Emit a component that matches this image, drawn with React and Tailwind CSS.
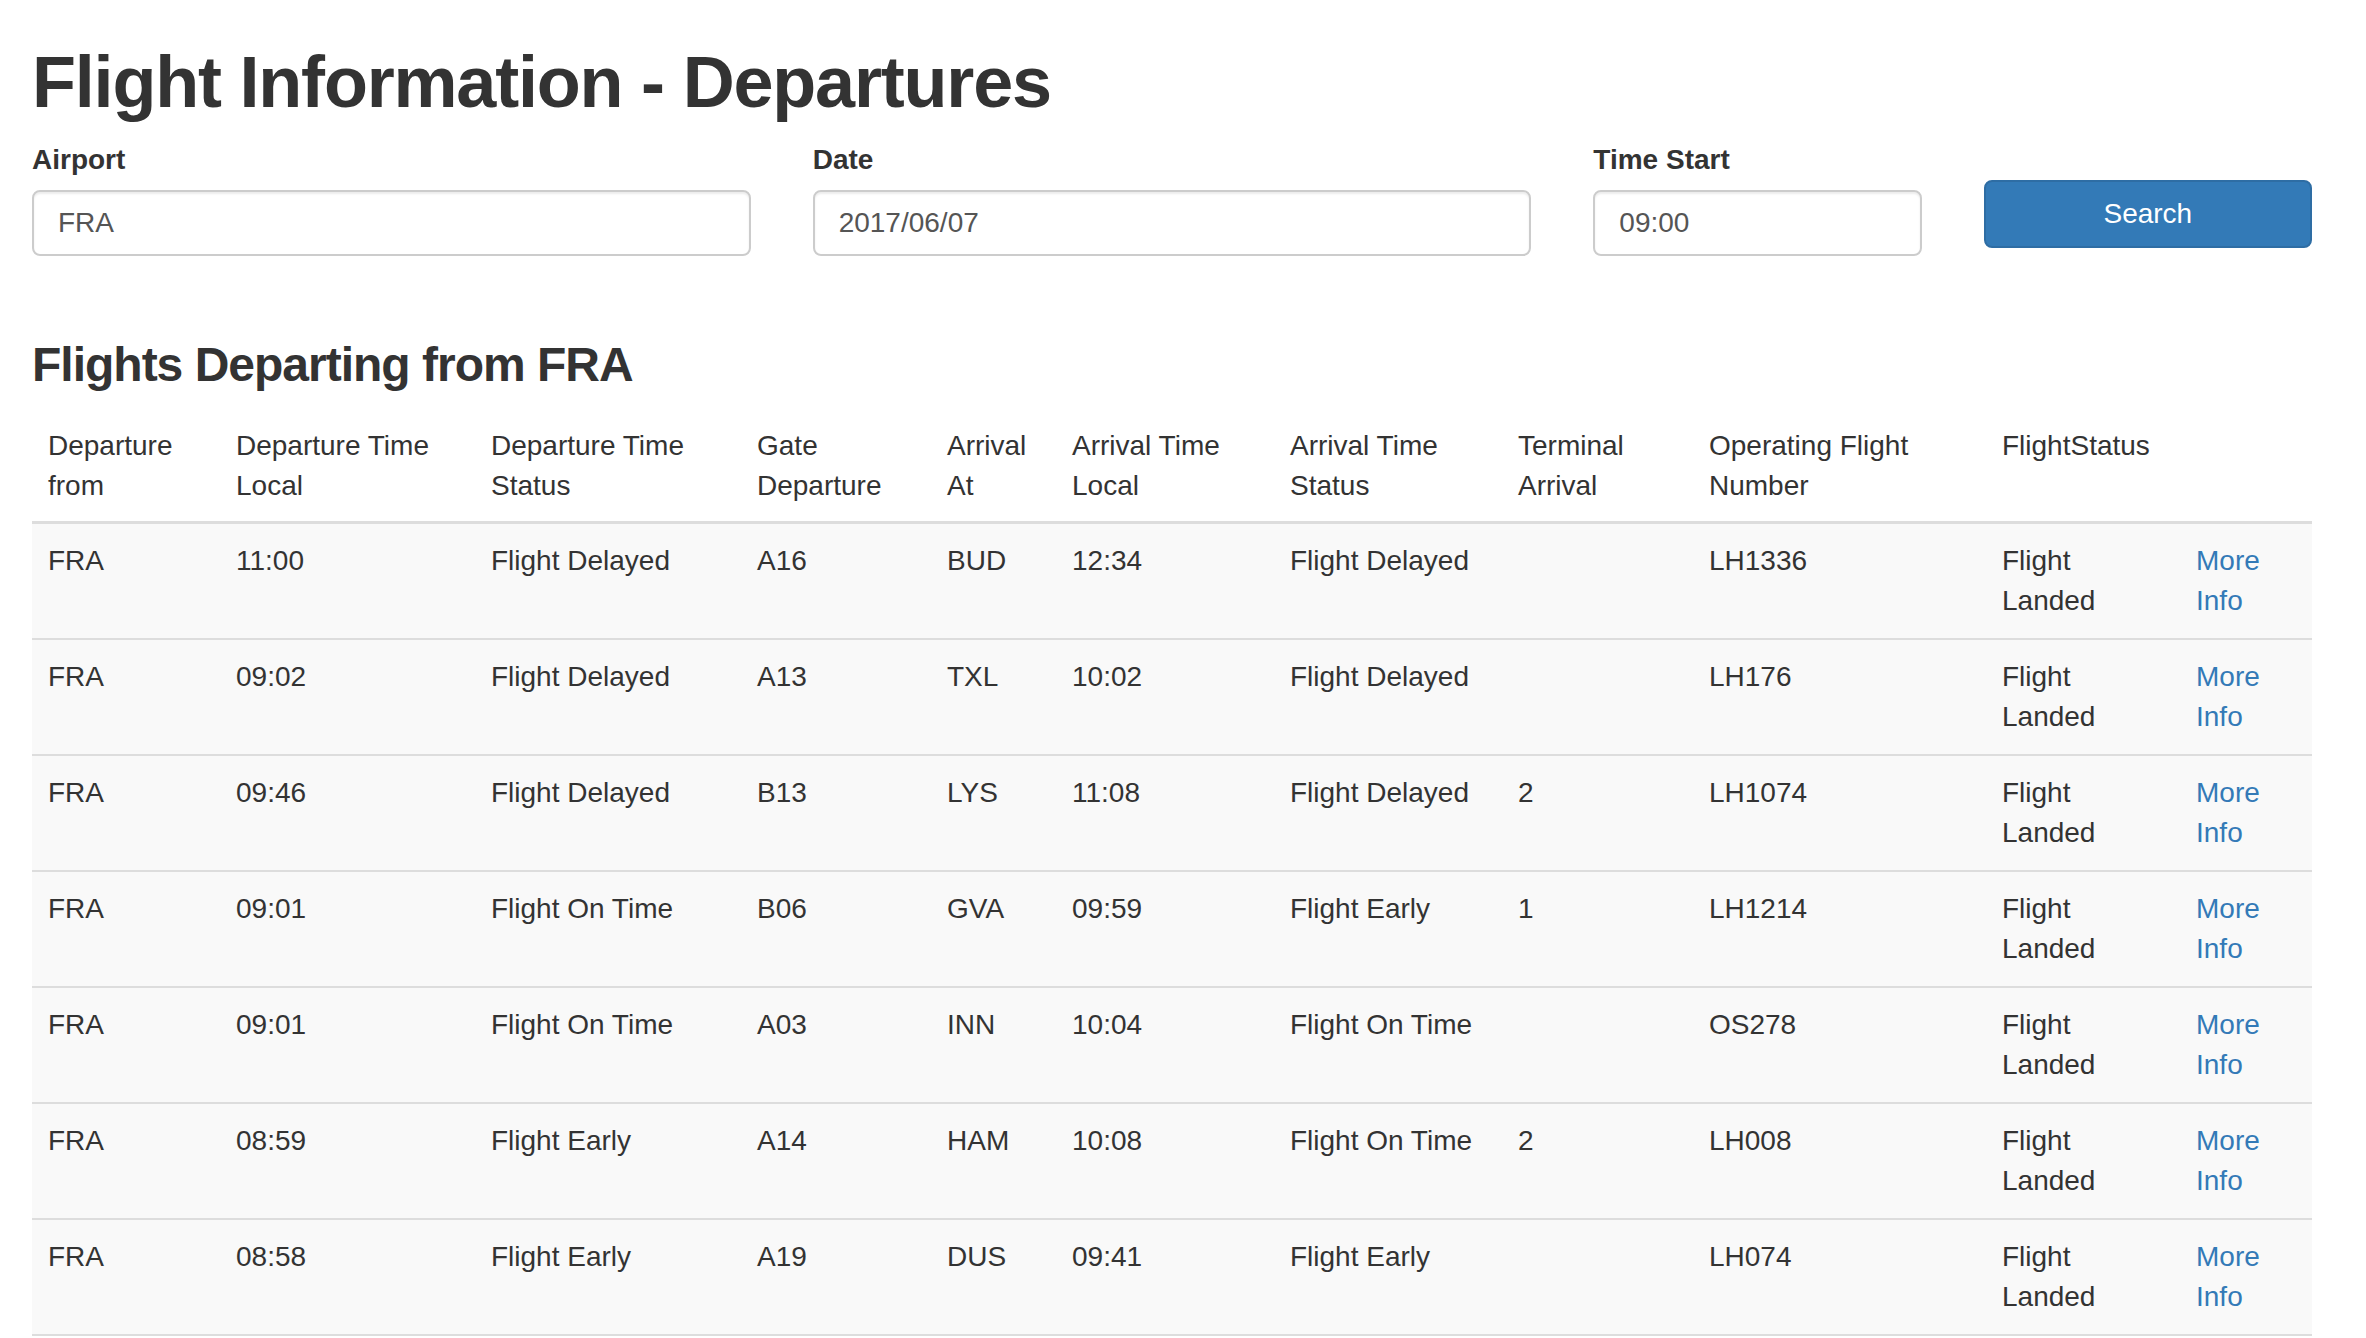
import React from "react";

const flights = [
  ["FRA", "11:00", "Flight Delayed", "A16", "BUD", "12:34", "Flight Delayed", "", "LH1336"],
  ["FRA", "09:02", "Flight Delayed", "A13", "TXL", "10:02", "Flight Delayed", "", "LH176"],
  ["FRA", "09:46", "Flight Delayed", "B13", "LYS", "11:08", "Flight Delayed", "2", "LH1074"],
  ["FRA", "09:01", "Flight On Time", "B06", "GVA", "09:59", "Flight Early", "1", "LH1214"],
  ["FRA", "09:01", "Flight On Time", "A03", "INN", "10:04", "Flight On Time", "", "OS278"],
  ["FRA", "08:59", "Flight Early", "A14", "HAM", "10:08", "Flight On Time", "2", "LH008"],
  ["FRA", "08:58", "Flight Early", "A19", "DUS", "09:41", "Flight Early", "", "LH074"],
];

const headers = [
  "Departure from",
  "Departure Time Local",
  "Departure Time Status",
  "Gate Departure",
  "Arrival At",
  "Arrival Time Local",
  "Arrival Time Status",
  "Terminal Arrival",
  "Operating Flight Number",
  "FlightStatus",
  "",
];

function Field({ label, value }) {
  return (
    <div>
      <label className="block text-[28px] leading-[40px] font-bold text-[#333]">
        {label}
      </label>
      <input
        type="text"
        defaultValue={value}
        readOnly
        className="mt-[10px] block h-[66px] w-full rounded-[8px] border-2 border-[#ccc] bg-white px-[24px] text-[28px] text-[#555] shadow-[inset_0_2px_2px_rgba(0,0,0,0.075)] outline-none"
      />
    </div>
  );
}

export default function App() {
  return (
    <div className="h-screen overflow-hidden bg-white pl-[32px] pr-[54px] pt-[43px] font-['Liberation_Sans',Arial,sans-serif] text-[#333]">
      <h1 className="text-[72px] leading-[79px] font-bold tracking-[-1.2px]">
        Flight Information - Departures
      </h1>

      {/* Search form */}
      <div className="mt-[18px] grid grid-cols-12 items-start gap-x-[62px]">
        <div className="col-span-4">
          <Field label="Airport" value="FRA" />
        </div>
        <div className="col-span-4">
          <Field label="Date" value="2017/06/07" />
        </div>
        <div className="col-span-2">
          <Field label="Time Start" value="09:00" />
        </div>
        <div className="col-span-2">
          <button className="mt-[40px] flex h-[68px] w-full items-center justify-center rounded-[8px] border-2 border-[#2e6da4] bg-[#337ab7] text-[28px] text-white">
            Search
          </button>
        </div>
      </div>

      <h3 className="mt-[82px] mb-[18px] text-[48px] leading-[53px] font-bold tracking-[-1px]">
        Flights Departing from FRA
      </h3>

      <table className="w-full table-fixed text-[28px] leading-[40px]">
        <colgroup>
          <col className="w-[188px]" />
          <col className="w-[255px]" />
          <col className="w-[266px]" />
          <col className="w-[190px]" />
          <col className="w-[125px]" />
          <col className="w-[218px]" />
          <col className="w-[228px]" />
          <col className="w-[191px]" />
          <col className="w-[293px]" />
          <col className="w-[194px]" />
          <col className="w-[132px]" />
        </colgroup>
        <thead>
          <tr>
            {headers.map((h, i) => (
              <th
                key={i}
                className="border-b-[3px] border-[#ddd] px-[16px] pt-[17px] pb-[15px] text-left align-top font-normal"
              >
                {h}
              </th>
            ))}
          </tr>
        </thead>
        <tbody>
          {flights.map((row, r) => (
            <tr key={r} className="bg-[#f9f9f9]">
              {row.map((cell, c) => (
                <td
                  key={c}
                  className="border-t-2 border-b-2 border-[#ddd] px-[16px] py-[17px] align-top"
                >
                  {cell}
                </td>
              ))}
              <td className="border-t-2 border-b-2 border-[#ddd] px-[16px] py-[17px] align-top">
                Flight Landed
              </td>
              <td className="border-t-2 border-b-2 border-[#ddd] px-[16px] py-[17px] align-top">
                <a href="#" className="text-[#337ab7]">
                  More Info
                </a>
              </td>
            </tr>
          ))}
        </tbody>
      </table>
    </div>
  );
}
